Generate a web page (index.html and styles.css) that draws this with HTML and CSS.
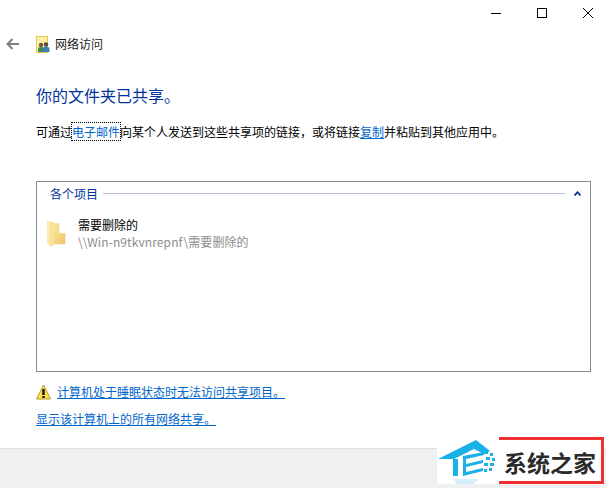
FILE: index.html
```html
<!DOCTYPE html>
<html lang="zh">
<head>
<meta charset="utf-8">
<title>网络访问</title>
<link rel="stylesheet" href="styles.css">
</head>
<body>
<div class="window">
  <div class="titlebar">
    <svg class="ctl" width="46" height="26" viewBox="0 0 46 26"><path d="M18 13.5h10" stroke="#000" fill="none"/></svg>
    <svg class="ctl" width="46" height="26" viewBox="0 0 46 26"><rect x="18.5" y="8.5" width="9" height="9" stroke="#000" fill="none"/></svg>
    <svg class="ctl" width="41" height="26" viewBox="0 0 41 26"><path d="M18 8l10 10M28 8L18 18" stroke="#000" fill="none"/></svg>
  </div>
  <div class="navrow">
    <svg class="back" width="13" height="12" viewBox="0 0 13 12"><path d="M6.5 1L1.5 6l5 5M2 6h11" stroke="#808080" stroke-width="2" fill="none"/></svg>
    <svg class="netico" width="14" height="17" viewBox="0 0 14 17">
      <rect x="0.5" y="0.5" width="11" height="16" fill="#fdeea8" stroke="#ecc653"/>
      <circle cx="5" cy="9" r="2.2" fill="#6b5a3a"/><path d="M2 16v-3q0-2 3-2t3 2v3z" fill="#3b8a5a"/>
      <circle cx="10" cy="8.5" r="2.2" fill="#5a4a30"/><path d="M7 16v-3q0-2.400 3-2.400t3.500 2.400v3z" fill="#3f7fb5"/>
    </svg>
    <span class="navtitle">网络访问</span>
  </div>
  <main class="content">
    <h1 class="heading">你的文件夹已共享。</h1>
    <p class="intro">可通过<a class="link focus">电子邮件</a>向某个人发送到这些共享项的链接，或将链接<a class="link under">复制</a>并粘贴到其他应用中。</p>
    <section class="items">
      <div class="items-head">
        <span class="items-title">各个项目</span>
        <span class="items-rule"></span>
        <svg class="chev" width="7" height="5" viewBox="0 0 7 5"><path d="M0.5 4.500L3.500 1.200l3 3.300" stroke="#003399" stroke-width="1.800" fill="none"/></svg>
      </div>
      <div class="item">
        <svg class="folder" width="19" height="27" viewBox="0 0 19 27">
          <defs>
            <linearGradient id="fg" x1="0" y1="0" x2="1" y2="1"><stop offset="0" stop-color="#fbe498"/><stop offset="1" stop-color="#eec56a"/></linearGradient>
            <linearGradient id="ff" x1="0" y1="0" x2="1" y2="0"><stop offset="0" stop-color="#fdedb4"/><stop offset="1" stop-color="#f8dc8c"/></linearGradient>
          </defs>
          <path d="M6.700 3.300H12.300V13.300H18.300V24.300H6.700z" fill="url(#fg)"/>
          <path d="M0 .700L6.700 2.300V25L4.300 26.700 0 24.300z" fill="url(#ff)"/>
        </svg>
        <div class="item-text">
          <div class="item-name">需要删除的</div>
          <div class="item-path">\\Win-n9tkvnrepnf\需要删除的</div>
        </div>
      </div>
    </section>
    <div class="warn">
      <svg class="warnico" width="15" height="16" viewBox="0 0 15 16"><path d="M7.500 1L14.500 15H.5z" fill="#fde047" stroke="#b89a2a" stroke-linejoin="round"/><path d="M7.500 5v6" stroke="#111" stroke-width="2.400"/><path d="M7.500 12v2" stroke="#111" stroke-width="2.400"/></svg>
      <a class="link under">计算机处于睡眠状态时无法访问共享项目。</a>
    </div>
    <a class="link under showall">显示该计算机上的所有网络共享。</a>
  </main>
  <footer class="footer"></footer>
  <div class="watermark">
    <svg class="wm-logo" width="62" height="47" viewBox="0 0 62 47">
      <rect y="11" width="62" height="36" fill="#fff"/>
      <path d="M1 22L39 3 53 14 47 17 37 12 17 22z" fill="#1ab0e8"/>
      <path d="M16 22h5v17h-5z" fill="#1ab0e8"/>
      <path d="M26 19L47 15v3L29 22v5L46 23v3L29 30v5L46 31v3L26 39z" fill="#1ab0e8"/>
      <path d="M48 14h3v3h-3zM53 16h3v3h-3zM49 20h4v3h-4zM55 21h3v3h-3zM47 26h4v3h-4zM53 26h4v3h-4zM47 32h3v3h-3zM52 31h3v3h-3z" fill="#1ab0e8"/>
      <path d="M16 42h26l-6 5H20z" fill="#d4effa"/>
    </svg>
    <div class="wm-box"><span class="wm-text">系统之家</span></div>
  </div>
</div>
</body>
</html>
```
FILE: styles.css
```css
html, body { margin: 0; padding: 0; }
body { background: #fff; font-family: "Noto Sans CJK SC", "Liberation Sans", sans-serif; }
.window { position: relative; width: 606px; height: 488px; display: flex; flex-direction: column; overflow: hidden; }
.titlebar { display: flex; justify-content: flex-end; height: 26px; }
.ctl { display: block; }
.navrow { display: flex; align-items: center; height: 34px; padding-left: 6px; }
.back { margin: 2px 17px 0 0; }
.netico { margin: 2px 5px 0 0; }
.navtitle { font-size: 12px; color: #1a1a1a; }
.content { flex: 1; padding: 0 15px 0 36px; display: flex; flex-direction: column; align-items: flex-start; }
.heading { margin: 24px 0 0; font-size: 16px; line-height: 22px; font-weight: 400; color: #003399; }
.intro { margin: 17px 0 0; font-size: 12px; line-height: 18px; color: #000; }
.link { color: #0066cc; }
.under { text-decoration: underline; }
.focus { outline: 1px dotted #000; }
.items { margin-top: 40px; box-sizing: border-box; width: 555px; height: 191px; border: 1px solid #868a94; }
.items-head { display: flex; align-items: center; height: 22px; padding-left: 13px; }
.items-title { font-size: 12px; color: #003399; }
.items-rule { flex: 1; height: 1px; background: #b4c0d8; margin: 0 9px 0 5px; }
.chev { margin-right: 9px; }
.item { display: flex; margin-top: 12px; padding-left: 10px; }
.folder { margin-top: 4px; }
.item-text { margin-left: 12px; font-size: 12px; line-height: 17px; }
.item-name { color: #000; }
.item-path { color: #8c8c8c; letter-spacing: 0.1px; }
.warn { display: flex; align-items: center; margin-top: 11px; font-size: 12px; line-height: 18px; }
.warnico { margin-right: 6px; }
.showall { margin-top: 9px; font-size: 12px; line-height: 18px; }
.footer { height: 39px; background: #f0f0f0; border-top: 1px solid #dfdfdf; }
.watermark { position: absolute; left: 437px; top: 437px; width: 167px; height: 47px; display: flex; }
.wm-logo { display: block; flex: none; }
.wm-box { box-sizing: border-box; flex: 1; border: 3px solid #f03030; border-left: none; background: #fff; display: flex; align-items: center; justify-content: center; padding-top: 2px; }
.wm-text { font-size: 23px; line-height: 30px; font-weight: 700; color: #2a2a2a; }
```
